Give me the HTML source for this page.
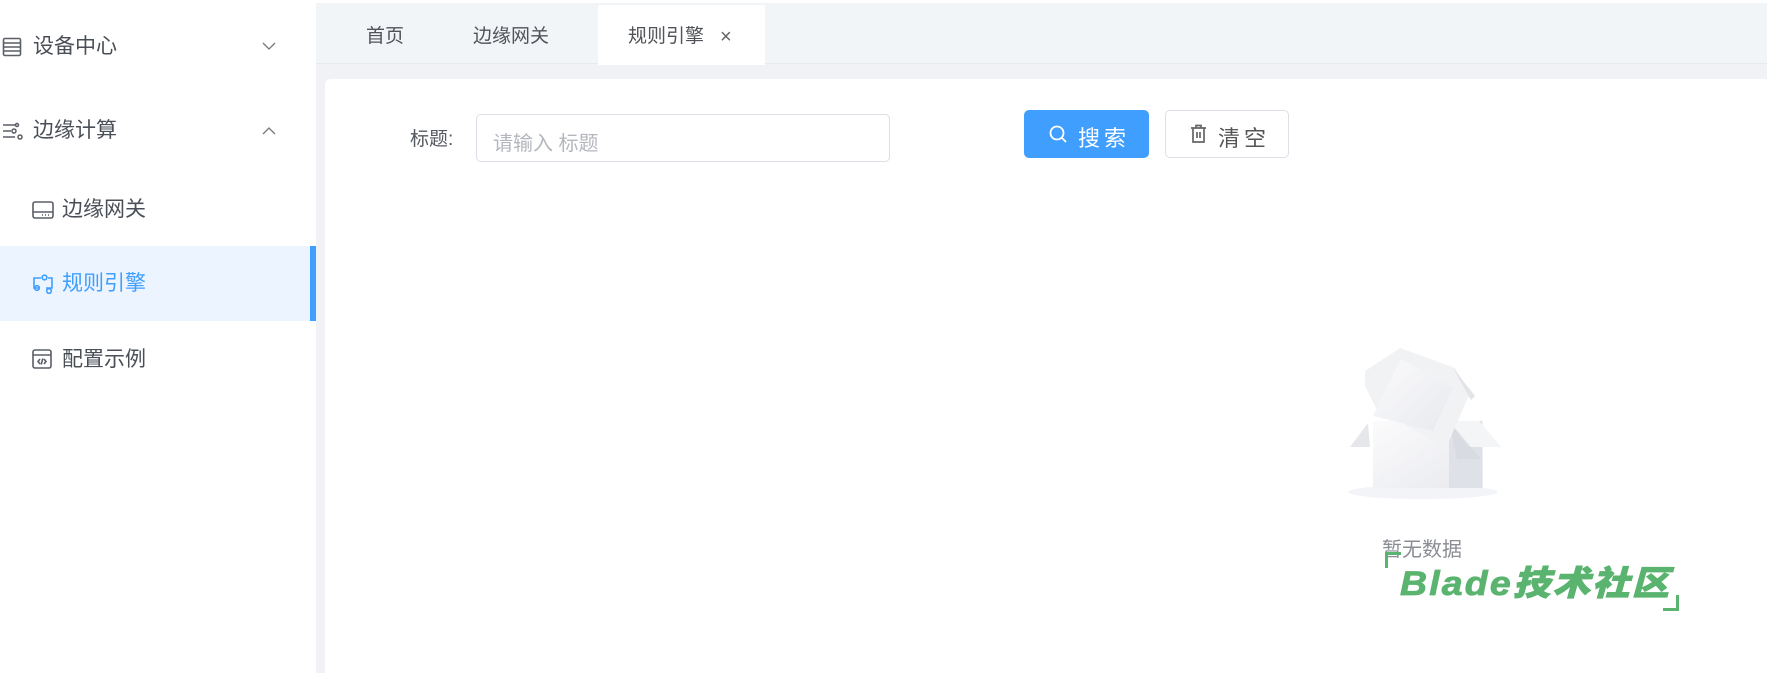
<!DOCTYPE html>
<html><head><meta charset="utf-8"><style>
*{margin:0;padding:0;box-sizing:border-box}
html,body{width:1767px;height:673px;overflow:hidden}
body{background:#f0f2f5;font-family:"Liberation Sans","Noto Sans CJK SC",sans-serif;position:relative;color:#606266}
.abs{position:absolute}
.side{left:0;top:0;width:316px;height:673px;background:#fff}
.item{position:absolute;left:0;width:316px;font-size:20px;color:#4a4f57;line-height:24px}
.tabs{left:316px;top:3px;width:1451px;height:61px;background:#f2f5f8;border-bottom:1px solid #e6e9ee}
.tab{position:absolute;top:22px;font-size:19px;color:#505358;line-height:24px}
.card{left:325px;top:79px;width:1442px;height:594px;background:#fff;border-radius:6px 0 0 0}
</style></head><body>
<div class="abs" style="left:0;top:0;width:1767px;height:3px;background:#fff"></div>
<div class="abs side">
  <div class="item" style="top:35px">
    <svg class="abs" style="left:2px;top:2px" width="20" height="20" viewBox="0 0 20 20" fill="none" stroke="#5a5f66" stroke-width="1.6"><rect x="1.5" y="1.5" width="17" height="17" rx="1.5"/><path d="M1.5 6h17M1.5 10h17M1.5 14h17"/></svg>
    <span class="abs" style="left:33px;top:0;font-size:21px">设备中心</span>
    <svg class="abs" style="left:262px;top:7px" width="14" height="9" viewBox="0 0 14 9" fill="none" stroke="#777" stroke-width="1.3"><path d="M1 1l6 6 6-6"/></svg>
  </div>
  <div class="item" style="top:119px">
    <svg class="abs" style="left:2px;top:2px" width="22" height="20" viewBox="0 0 22 20" fill="none" stroke="#5a5f66" stroke-width="1.5"><path d="M1 4h12M1 10h8M1 16h12"/><circle cx="15" cy="4" r="1.5"/><circle cx="12" cy="10" r="2"/><circle cx="18" cy="16" r="2"/></svg>
    <span class="abs" style="left:33px;top:0;font-size:21px">边缘计算</span>
    <svg class="abs" style="left:262px;top:7px" width="14" height="9" viewBox="0 0 14 9" fill="none" stroke="#777" stroke-width="1.3"><path d="M1 8l6-6 6 6"/></svg>
  </div>
  <div class="item" style="top:198px">
    <svg class="abs" style="left:32px;top:3px" width="22" height="18" viewBox="0 0 22 18" fill="none" stroke="#5a5f66" stroke-width="1.6"><rect x="1" y="1" width="20" height="16" rx="2"/><path d="M1 11h20M13 14h1M16 14h1M10 14h1"/></svg>
    <span class="abs" style="left:62px;top:0;font-size:21px">边缘网关</span>
  </div>
  <div class="abs" style="left:0;top:246px;width:316px;height:75px;background:#ecf5ff"></div>
  <div class="abs" style="left:310px;top:246px;width:6px;height:75px;background:#409eff"></div>
  <div class="item" style="top:272px;color:#409eff">
    <svg class="abs" style="left:32px;top:2px" width="22" height="20" viewBox="0 0 22 20" fill="none" stroke="#409eff" stroke-width="1.6"><path d="M9 4H2v10h6M16 4h4v10h-6"/><circle cx="12.5" cy="3.5" r="2.3"/><circle cx="5" cy="14" r="2.3"/><circle cx="17" cy="17" r="2.3"/></svg>
    <span class="abs" style="left:62px;top:0;font-size:21px">规则引擎</span>
  </div>
  <div class="item" style="top:348px">
    <svg class="abs" style="left:32px;top:1px" width="20" height="20" viewBox="0 0 20 20" fill="none" stroke="#5a5f66" stroke-width="1.6"><rect x="1" y="1" width="18" height="18" rx="2"/><path d="M1 6h18M8 10l-2 2.5 2 2.5M12 10l2 2.5-2 2.5M10.8 9.5l-1.6 6"/></svg>
    <span class="abs" style="left:62px;top:0;font-size:21px">配置示例</span>
  </div>
</div>
<div class="abs tabs">
  <div class="abs" style="left:282px;top:2px;width:167px;height:60px;background:#fff"></div>
  <span class="tab" style="left:50px">首页</span>
  <span class="tab" style="left:157px">边缘网关</span>
  <span class="tab" style="left:312px">规则引擎</span>
  <span class="tab" style="left:404px;font-size:20px;color:#666">×</span>
</div>
<div class="abs card"></div>
<span class="abs" style="left:410px;top:124px;font-size:19px;color:#555a60">标题:</span>
<div class="abs" style="left:476px;top:114px;width:414px;height:48px;border:1.5px solid #dcdfe6;border-radius:5px;background:#fff"></div>
<span class="abs" style="left:493px;top:127px;font-size:20px;color:#b4b7bd">请输入 标题</span>
<div class="abs" style="left:1024px;top:110px;width:125px;height:48px;background:#409eff;border-radius:5px"></div>
<svg class="abs" style="left:1049px;top:125px" width="19" height="19" viewBox="0 0 19 19" fill="none" stroke="#fff" stroke-width="1.8"><circle cx="8" cy="8" r="6.5"/><path d="M13 13l4 4"/></svg>
<span class="abs" style="left:1078px;top:121px;font-size:22px;color:#fff;letter-spacing:4px">搜索</span>
<div class="abs" style="left:1165px;top:110px;width:124px;height:48px;background:#fff;border:1.5px solid #dcdfe6;border-radius:5px"></div>
<svg class="abs" style="left:1190px;top:124px" width="17" height="20" viewBox="0 0 17 20" fill="none" stroke="#666" stroke-width="1.7"><path d="M1 4h15M6 4V1.5h5V4M3 4v14h11V4M7 8v6M10 8v6"/></svg>
<span class="abs" style="left:1218px;top:121px;font-size:22px;color:#555;letter-spacing:4px">清空</span>
<svg class="abs" style="left:1345px;top:345px" width="160" height="160" viewBox="0 0 160 160">
<defs><linearGradient id="g" x1="0" y1="0" x2="1" y2="1"><stop offset="0" stop-color="#fbfbfc"/><stop offset="1" stop-color="#e8e9ee"/></linearGradient></defs>
<ellipse cx="78" cy="147" rx="75" ry="7" fill="#f3f4f7"/>
<path d="M23 78l-18 24h20z" fill="#e6e7ea"/>
<path d="M28 76h110v67H28z" fill="url(#g)"/>
<path d="M104 76h33v67h-33z" fill="#dfe1e8"/>
<path d="M104 76h30l22 26h-33z" fill="#f4f5f7"/>
<path d="M104 76l8 38h24z" fill="#d6d8df" opacity=".7"/>
<path d="M20 26L55 3l55 20 15 25-24 55-70-40-11-22z" fill="#f1f2f4"/>
<path d="M56 14l52 28-20 44-40-10-20-5z" fill="url(#g)"/>
<path d="M108 23l22 28-4 4z" fill="#e3e4e8"/>
</svg>
<span class="abs" style="left:1382px;top:533px;font-size:20px;color:#8a8d94">暂无数据</span>
<div class="abs" style="left:1385px;top:552px;width:3px;height:16px;background:#5ab46f"></div>
<div class="abs" style="left:1385px;top:552px;width:16px;height:3px;background:#5ab46f"></div>
<div class="abs" style="left:1676px;top:595px;width:3px;height:16px;background:#5ab46f"></div>
<div class="abs" style="left:1663px;top:608px;width:16px;height:3px;background:#5ab46f"></div>
<span class="abs" style="left:1400px;top:566px;font-size:34px;font-weight:900;font-style:italic;color:#5ab46f;letter-spacing:2px;line-height:36px;transform:scaleX(1.1);transform-origin:left top;-webkit-text-stroke:0.8px #5ab46f">Blade技术社区</span>
</body></html>
